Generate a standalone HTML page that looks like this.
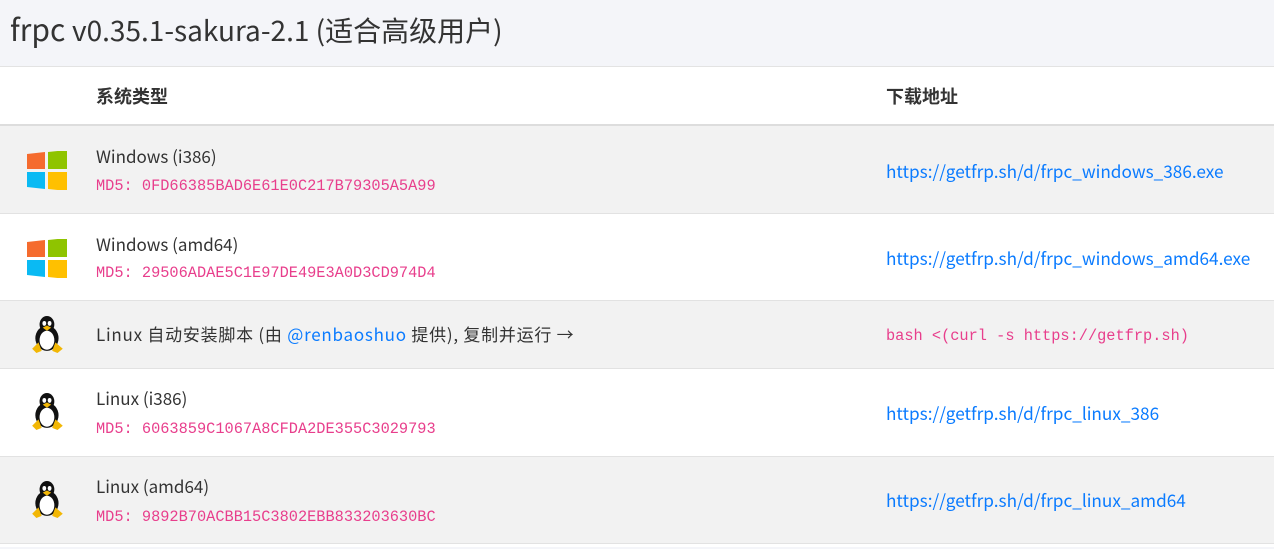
<!DOCTYPE html>
<html><head><meta charset="utf-8"><style>
body{margin:0;width:1274px;height:549px;background:#f4f5f9;font-family:"Noto Sans CJK SC","Liberation Sans",sans-serif;color:#333;overflow:hidden}
h1{margin:0;height:66px;font-weight:normal;font-size:30px;line-height:56px;padding-left:10px;color:#333}
h1 small{font-size:28px}
.card{position:absolute;top:66px;left:0;width:1274px;height:480px;background:#fff;border-top:1px solid #e3e3e3}
.row{position:absolute;left:0;width:1274px;border-bottom:1px solid #e2e2e2;box-sizing:border-box}
.g{background:#f2f2f2}
.ic{position:absolute;left:27px}
.t{position:absolute;left:96px;font-size:17px;line-height:20px}
.m{position:absolute;left:96px;font-family:"Liberation Mono",monospace;font-size:15.3px;color:#e83e8c;line-height:20px}
.u{position:absolute;left:886px;font-size:17.2px;color:#0a7bff;line-height:20px}
.th{font-weight:bold;font-size:18px}
</style></head><body>
<h1>frpc <small>v0.35.1-sakura-2.1 (适合高级用户)</small></h1>
<div class="card">
<div class="row" style="top:0;height:59px;border-bottom:2px solid #ddd"><span class="t th" style="top:19px">系统类型</span><span class="u th" style="top:19px;color:#333">下载地址</span></div>

<div class="row g" style="top:59px;height:88px">
<svg class="ic" style="top:25px" width="40" height="39" viewBox="0 0 40 39"><path d="M0 3L18 1V18H0z" fill="#f56b2e"/><path d="M21 1L40 -1V18H21z" fill="#8fc400"/><path d="M0 21H18V38L0 36z" fill="#0abaf3"/><path d="M21 21H40V40L21 38z" fill="#ffc000"/></svg>
<span class="t" style="top:20px">Windows (i386)</span><span class="m" style="top:50px">MD5: 0FD66385BAD6E61E0C217B79305A5A99</span>
<span class="u" style="top:35px">https://getfrp.sh/d/frpc_windows_386.exe</span></div>

<div class="row" style="top:147px;height:87px">
<svg class="ic" style="top:25px" width="40" height="39" viewBox="0 0 40 39"><path d="M0 3L18 1V18H0z" fill="#f56b2e"/><path d="M21 1L40 -1V18H21z" fill="#8fc400"/><path d="M0 21H18V38L0 36z" fill="#0abaf3"/><path d="M21 21H40V40L21 38z" fill="#ffc000"/></svg>
<span class="t" style="top:20px">Windows (amd64)</span><span class="m" style="top:49px">MD5: 29506ADAE5C1E97DE49E3A0D3CD974D4</span>
<span class="u" style="top:34px">https://getfrp.sh/d/frpc_windows_amd64.exe</span></div>

<div class="row g" style="top:234px;height:68px">
<svg class="ic" style="top:15px;left:31px" width="34" height="38" viewBox="0 0 32 36"><ellipse cx="15" cy="21" rx="11" ry="12" fill="#111"/><ellipse cx="15" cy="8" rx="7" ry="8" fill="#111"/><ellipse cx="15" cy="23" rx="7" ry="9" fill="#fff"/><ellipse cx="12.5" cy="7" rx="1.8" ry="2.3" fill="#fff"/><ellipse cx="17.5" cy="7" rx="1.8" ry="2.3" fill="#fff"/><path d="M11 11L15 9L19 11L15 14z" fill="#f2b705"/><path d="M1 31L7 25L10 33L5 35z" fill="#f2b705"/><path d="M20 33L23 25L30 31L25 35z" fill="#f2b705"/></svg>
<span class="t" style="top:23px;letter-spacing:0.75px">Linux 自动安装脚本 (由 <span style="color:#0a7bff">@renbaoshuo</span> 提供), 复制并运行 →</span>
<span class="u" style="top:25px;font-family:'Liberation Mono',monospace;font-size:15.3px;color:#e83e8c">bash &lt;(curl -s https://getfrp.sh)</span></div>

<div class="row" style="top:302px;height:88px">
<svg class="ic" style="top:24px;left:31px" width="34" height="38" viewBox="0 0 32 36"><ellipse cx="15" cy="21" rx="11" ry="12" fill="#111"/><ellipse cx="15" cy="8" rx="7" ry="8" fill="#111"/><ellipse cx="15" cy="23" rx="7" ry="9" fill="#fff"/><ellipse cx="12.5" cy="7" rx="1.8" ry="2.3" fill="#fff"/><ellipse cx="17.5" cy="7" rx="1.8" ry="2.3" fill="#fff"/><path d="M11 11L15 9L19 11L15 14z" fill="#f2b705"/><path d="M1 31L7 25L10 33L5 35z" fill="#f2b705"/><path d="M20 33L23 25L30 31L25 35z" fill="#f2b705"/></svg>
<span class="t" style="top:19px">Linux (i386)</span><span class="m" style="top:50px">MD5: 6063859C1067A8CFDA2DE355C3029793</span>
<span class="u" style="top:34px">https://getfrp.sh/d/frpc_linux_386</span></div>

<div class="row g" style="top:390px;height:87px">
<svg class="ic" style="top:24px;left:31px" width="34" height="38" viewBox="0 0 32 36"><ellipse cx="15" cy="21" rx="11" ry="12" fill="#111"/><ellipse cx="15" cy="8" rx="7" ry="8" fill="#111"/><ellipse cx="15" cy="23" rx="7" ry="9" fill="#fff"/><ellipse cx="12.5" cy="7" rx="1.8" ry="2.3" fill="#fff"/><ellipse cx="17.5" cy="7" rx="1.8" ry="2.3" fill="#fff"/><path d="M11 11L15 9L19 11L15 14z" fill="#f2b705"/><path d="M1 31L7 25L10 33L5 35z" fill="#f2b705"/><path d="M20 33L23 25L30 31L25 35z" fill="#f2b705"/></svg>
<span class="t" style="top:19px">Linux (amd64)</span><span class="m" style="top:50px">MD5: 9892B70ACBB15C3802EBB833203630BC</span>
<span class="u" style="top:33px">https://getfrp.sh/d/frpc_linux_amd64</span></div>
</div>
</body></html>
